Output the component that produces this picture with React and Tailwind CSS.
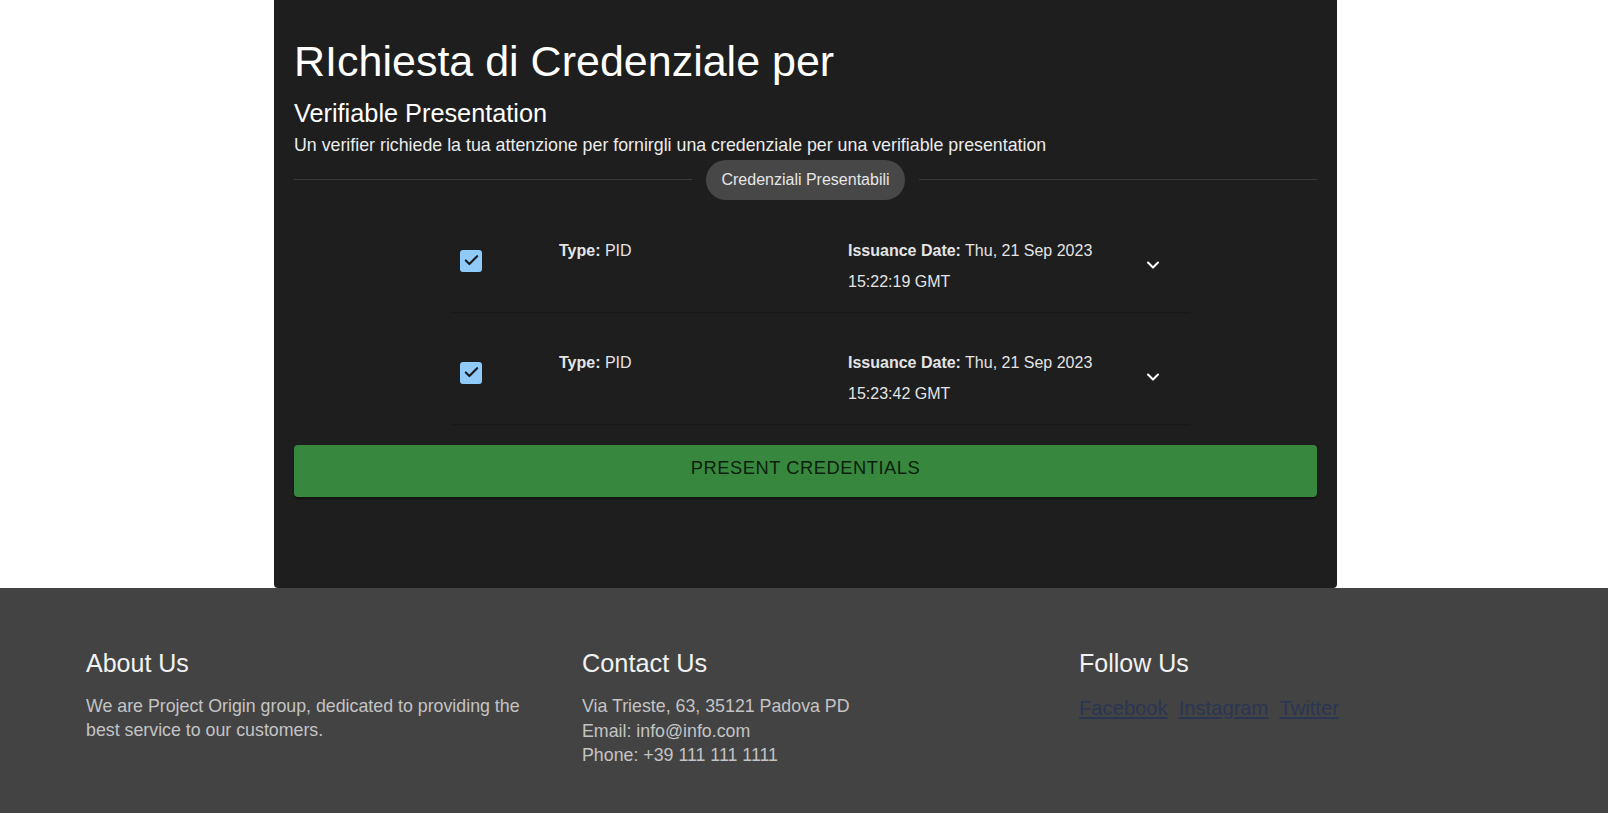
import { ChevronDown, Check } from 'lucide-react'

const creds = [
  { type: 'PID', date: 'Thu, 21 Sep 2023', time: '15:22:19 GMT' },
  { type: 'PID', date: 'Thu, 21 Sep 2023', time: '15:23:42 GMT' },
]

function CredentialRow({ cred }) {
  return (
    <div className="flex items-start h-[112px] shadow-[0_1px_1px_rgba(0,0,0,0.18)]">
      <div className="w-[108px] pl-[9px] pt-[50px]">
        <div className="w-[22px] h-[22px] rounded-[3px] bg-[#90caf9] flex items-center justify-center">
          <Check size={17} strokeWidth={3} className="text-[#1a1a1a]" />
        </div>
      </div>
      <div className="w-[289px] pt-[35px] text-[16px] leading-[31px] text-[#e4e4e4]">
        <span className="font-bold">Type:</span> {cred.type}
      </div>
      <div className="w-[262px] pt-[35px] text-[16px] leading-[31px] text-[#e4e4e4]">
        <span className="font-bold">Issuance Date:</span> {cred.date}
        <br />
        {cred.time}
      </div>
      <div className="pl-[33px] pt-[55px]">
        <ChevronDown size={20} strokeWidth={2.5} className="text-white" />
      </div>
    </div>
  )
}

export default function App() {
  return (
    <div className="min-h-screen bg-white flex flex-col font-['Liberation_Sans',Arial,sans-serif]">
      <main className="w-[1063px] ml-[274px] bg-[#1e1e1e] rounded-b-[4px] px-[20px] pt-[36px] pb-[91px] text-white">
        <h1 className="text-[43px] leading-[1.2]">RIchiesta di Credenziale per</h1>
        <h2 className="mt-[10px] text-[25.3px] leading-[1.2]">Verifiable Presentation</h2>
        <p className="mt-[5px] text-[17.8px] leading-[24px] text-[#ececec]">
          Un verifier richiede la tua attenzione per fornirgli una credenziale per una verifiable presentation
        </p>

        {/* divider with chip */}
        <div className="mt-[3px] flex items-center gap-[14px]">
          <div className="flex-1 h-px bg-[#3a3a3a]" />
          <div className="h-[40px] px-[15px] rounded-full bg-[#474747] flex items-center text-[16px] text-[#e6e6e6]">
            Credenziali Presentabili
          </div>
          <div className="flex-1 h-px bg-[#3a3a3a]" />
        </div>

        <div className="ml-[157px] w-[739px]">
          {creds.map((c, i) => (
            <CredentialRow key={i} cred={c} />
          ))}
        </div>

        <button className="mt-[21px] w-full h-[52px] pb-[6px] rounded-[4px] bg-[#38873e] shadow-[0_2px_2px_rgba(0,0,0,0.4)] text-[18.3px] tracking-[0.03em] text-[#0a1f0b]">
          PRESENT CREDENTIALS
        </button>
      </main>

      <footer className="flex-1 bg-[#434343] pl-[86px] pt-[60px] pb-[40px]">
        <div className="flex">
          <div className="w-[496px]">
            <h3 className="text-[25px] leading-[1.2] text-[#f2f2f2]">About Us</h3>
            <p className="mt-[16px] w-[450px] text-[17.8px] leading-[24.5px] text-[#c4c4c4]">
              We are Project Origin group, dedicated to providing the best service to our customers.
            </p>
          </div>
          <div className="w-[497px]">
            <h3 className="text-[25.3px] leading-[1.2] text-[#f2f2f2]">Contact Us</h3>
            <div className="mt-[16px] text-[17.8px] leading-[24.5px] text-[#c4c4c4]">
              <p>Via Trieste, 63, 35121 Padova PD</p>
              <p>Email: info@info.com</p>
              <p>Phone: +39 111 111 1111</p>
            </div>
          </div>
          <div>
            <h3 className="text-[25px] leading-[1.2] text-[#f2f2f2]">Follow Us</h3>
            <div className="mt-[17px] flex gap-[11px] text-[20.2px] leading-[26px] text-[#2a3654]">
              <a href="#" className="underline">Facebook</a>
              <a href="#" className="underline">Instagram</a>
              <a href="#" className="underline">Twitter</a>
            </div>
          </div>
        </div>
      </footer>
    </div>
  )
}
